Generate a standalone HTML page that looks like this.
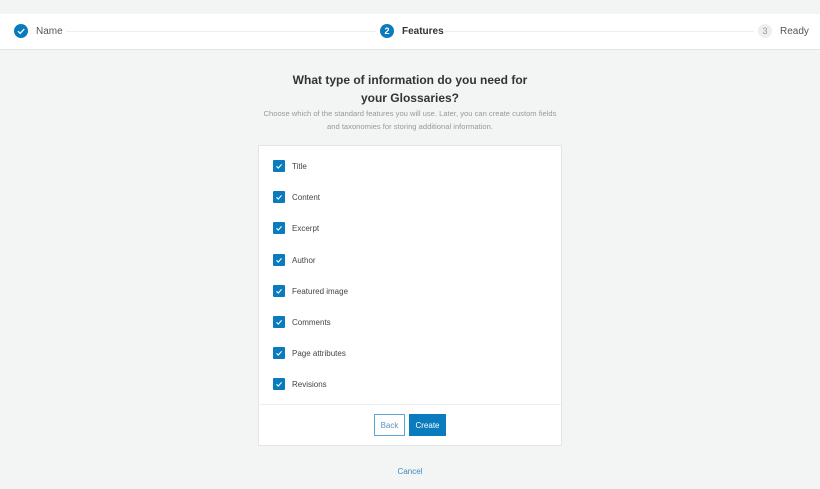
<!DOCTYPE html>
<html><head><style>
body{margin:0;width:820px;height:489px;background:#f3f4f4;font-family:"Liberation Sans",sans-serif;position:relative;overflow:hidden}
.hdr{position:absolute;top:14px;left:0;width:820px;height:35px;background:#fff;border-bottom:1px solid #e2e4e5}
.line{position:absolute;top:17px;height:1px;background:#eceeef}
.c{position:absolute;top:10px;width:14px;height:14px;border-radius:50%;background:#0a7bbd;color:#fff;font-size:9px;font-weight:bold;text-align:center;line-height:14px}
.lbl{position:absolute;top:12px;font-size:10px;line-height:12px;color:#555}
h1{position:absolute;top:71px;left:0;width:820px;margin:0;text-align:center;font-size:12px;line-height:18px;color:#333;font-weight:bold}
.sub{position:absolute;top:107px;left:0;width:820px;text-align:center;font-size:7.6px;line-height:13px;color:#999}
.card{position:absolute;left:258px;top:145px;width:302px;height:299px;background:#fff;border:1px solid #e2e4e5}
.it{position:absolute;left:14px;height:12px;font-size:8px;color:#444;line-height:12px}
.cb{position:absolute;left:0;top:0;width:12px;height:12px;background:#0a7bbd;border-radius:1px}
.it span{position:absolute;left:19px;top:1px;white-space:nowrap}
.div{position:absolute;left:0;top:258px;width:302px;height:1px;background:#eceeef}
.btn{position:absolute;top:268px;height:22px;font-size:8px;line-height:22px;text-align:center;box-sizing:border-box}
</style></head><body>
<div class="hdr">
<div class="line" style="left:66px;width:310px"></div>
<div class="line" style="left:444px;width:310px"></div>
<div class="c" style="left:14px"><svg width="14" height="14"><path d="M4 7.2l2.2 2.2 4-4.4" stroke="#fff" stroke-width="1.3" fill="none"/></svg></div>
<div class="lbl" style="left:36px">Name</div>
<div class="c" style="left:380px">2</div>
<div class="lbl" style="left:402px;color:#333;font-weight:bold">Features</div>
<div class="c" style="left:758px;background:#eceeef;color:#999;font-weight:normal">3</div>
<div class="lbl" style="left:780px">Ready</div>
</div>
<h1>What type of information do you need for<br>your Glossaries?</h1>
<div class="sub">Choose which of the standard features you will use. Later, you can create custom fields<br>and taxonomies for storing additional information.</div>
<div class="card">
<div class="it" style="top:14px"><div class="cb"><svg width="12" height="12"><path d="M3.5 6.3l1.8 1.8 3.3-3.8" stroke="#fff" stroke-width="1.1" fill="none"/></svg></div><span>Title</span></div>
<div class="it" style="top:45px"><div class="cb"><svg width="12" height="12"><path d="M3.5 6.3l1.8 1.8 3.3-3.8" stroke="#fff" stroke-width="1.1" fill="none"/></svg></div><span>Content</span></div>
<div class="it" style="top:76px"><div class="cb"><svg width="12" height="12"><path d="M3.5 6.3l1.8 1.8 3.3-3.8" stroke="#fff" stroke-width="1.1" fill="none"/></svg></div><span>Excerpt</span></div>
<div class="it" style="top:108px"><div class="cb"><svg width="12" height="12"><path d="M3.5 6.3l1.8 1.8 3.3-3.8" stroke="#fff" stroke-width="1.1" fill="none"/></svg></div><span>Author</span></div>
<div class="it" style="top:139px"><div class="cb"><svg width="12" height="12"><path d="M3.5 6.3l1.8 1.8 3.3-3.8" stroke="#fff" stroke-width="1.1" fill="none"/></svg></div><span>Featured image</span></div>
<div class="it" style="top:170px"><div class="cb"><svg width="12" height="12"><path d="M3.5 6.3l1.8 1.8 3.3-3.8" stroke="#fff" stroke-width="1.1" fill="none"/></svg></div><span>Comments</span></div>
<div class="it" style="top:201px"><div class="cb"><svg width="12" height="12"><path d="M3.5 6.3l1.8 1.8 3.3-3.8" stroke="#fff" stroke-width="1.1" fill="none"/></svg></div><span>Page attributes</span></div>
<div class="it" style="top:232px"><div class="cb"><svg width="12" height="12"><path d="M3.5 6.3l1.8 1.8 3.3-3.8" stroke="#fff" stroke-width="1.1" fill="none"/></svg></div><span>Revisions</span></div>
<div class="div"></div>
<div class="btn" style="left:115px;width:31px;border:1px solid #5aa3d4;color:#5a93c0;background:#fff">Back</div>
<div class="btn" style="left:150px;width:37px;background:#0a7bbd;color:#fff;line-height:23px">Create</div>
</div>
<div style="position:absolute;top:467px;left:0;width:820px;text-align:center;font-size:8px;color:#3a8ac4">Cancel</div>
</body></html>
